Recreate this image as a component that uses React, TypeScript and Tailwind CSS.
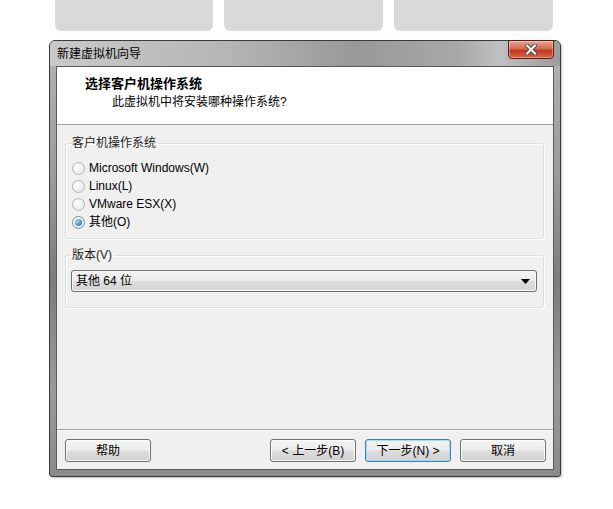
import React from "react";

const ui = "font-['Liberation_Sans','Noto_Sans_CJK_SC',sans-serif] text-[12px] leading-[16px] text-black";

const Radio = ({ label, checked }: { label: string; checked?: boolean }) => (
  <div className="flex h-[18px] items-center gap-[4px]">
    <span
      className={
        "flex h-[13px] w-[13px] items-center justify-center rounded-full border bg-[radial-gradient(circle_at_35%_35%,#ffffff,#e2e2e2)] " +
        (checked ? "border-[#6d8fae]" : "border-[#b4b4b4]")
      }
    >
      {checked && (
        <span className="h-[7px] w-[7px] rounded-full bg-[radial-gradient(circle_at_35%_35%,#9fd3f5,#1b5e9c)]" />
      )}
    </span>
    <span>{label}</span>
  </div>
);

const Btn = ({ children, primary, className = "" }: { children: React.ReactNode; primary?: boolean; className?: string }) => (
  <button
    className={
      "flex h-[23px] w-[86px] items-center justify-center rounded-[3px] border bg-[linear-gradient(#f4f4f4_0%,#ececec_48%,#dcdcdc_52%,#d2d2d2_100%)] " +
      (primary ? "border-[#3c7fb1] shadow-[inset_0_0_0_1px_#a6ddf6]" : "border-[#707070] shadow-[inset_0_0_0_1px_#fcfcfc]") +
      " " +
      className
    }
  >
    {children}
  </button>
);

export default function App() {
  return (
    <div className={"h-[509px] w-[613px] bg-white " + ui}>
      {/* background cards peeking from the top */}
      <div className="flex h-[31px] gap-[11px] pl-[55px]">
        <div className="w-[158px] rounded-b-[6px] bg-[#d9d9d9]" />
        <div className="w-[159px] rounded-b-[6px] bg-[#d9d9d9]" />
        <div className="w-[159px] rounded-b-[6px] bg-[#d9d9d9]" />
      </div>

      {/* dialog window */}
      <div className="relative ml-[49px] mt-[9px] flex h-[437px] w-[512px] flex-col rounded-t-[6px] rounded-b-[3px] border border-[#3a3a3a] bg-[linear-gradient(180deg,#b4b4b4_0%,#9c9c9c_30%,#7c7c7c_55%,#9a9a9a_80%,#8a8a8a_100%)] shadow-[1px_1px_2px_rgba(0,0,0,0.25)]">
        <div className="flex h-[25px] items-center rounded-t-[5px] bg-[linear-gradient(90deg,#c9c9c9_0%,#b5b5b5_35%,#989898_60%,#a8a8a8_80%,#c0c0c0_88%,#9c9c9c_100%)] pl-[7px]">
          <span className="pt-[1px]">新建虚拟机向导</span>
        </div>

        {/* close button */}
        <div className="absolute right-[6px] top-[-1px] flex h-[19px] w-[46px] items-center justify-center rounded-b-[4px] border border-[#5b1a12] bg-[linear-gradient(#e8a493_0%,#d56a52_45%,#c2381d_55%,#d7644a_100%)] shadow-[inset_0_0_0_1px_rgba(255,255,255,0.35)]">
          <svg width="12" height="11" viewBox="0 0 12 11">
            <path d="M2 1.5 L10 9.5 M10 1.5 L2 9.5" stroke="#4a4a4a" strokeWidth="4" strokeLinecap="square" />
            <path d="M2 1.5 L10 9.5 M10 1.5 L2 9.5" stroke="#ffffff" strokeWidth="2" strokeLinecap="square" />
          </svg>
        </div>

        {/* client area */}
        <div className="mx-[6px] mb-[6px] flex flex-1 flex-col border border-[#5a5a5a] bg-[#f0f0f0]">
          <div className="h-[58px] border-b border-[#a0a0a0] bg-white pl-[28px] pt-[9px]">
            <div className="text-[13px] font-bold leading-[16px]">选择客户机操作系统</div>
            <div className="pl-[27px] pt-[2px]">此虚拟机中将安装哪种操作系统?</div>
          </div>

          <div className="flex flex-1 flex-col border-b border-[#a0a0a0] pl-[8px] pr-[9px] pt-[10px] shadow-[0_1px_0_#ffffff]">
            <fieldset className="h-[104px] rounded-[3px] border border-[#d9dfe3] px-[6px] shadow-[inset_1px_1px_0_#ffffff,1px_1px_0_#ffffff]">
              <legend className="px-0 pr-[3px] text-[#1e1e1e]">客户机操作系统</legend>
              <div className="flex flex-col pt-[8px]">
                <Radio label="Microsoft Windows(W)" />
                <Radio label="Linux(L)" />
                <Radio label="VMware ESX(X)" />
                <Radio label="其他(O)" checked />
              </div>
            </fieldset>

            <fieldset className="mt-[8px] h-[61px] rounded-[3px] border border-[#d9dfe3] pl-[5px] pr-[6px] shadow-[inset_1px_1px_0_#ffffff,1px_1px_0_#ffffff]">
              <legend className="px-0 pl-[1px] pr-[3px] text-[#1e1e1e]">版本(V)</legend>
              <div className="pt-[7px]">
                <div className="flex h-[22px] items-center justify-between rounded-[3px] border border-[#707070] bg-[linear-gradient(#f3f3f3_0%,#ebebeb_48%,#dddddd_52%,#d4d4d4_100%)] pl-[4px] pr-[6px] shadow-[inset_0_0_0_1px_#fafafa]">
                  <span>其他 64 位</span>
                  <svg width="9" height="5" viewBox="0 0 9 5">
                    <path d="M0 0 H9 L4.5 5 Z" fill="#000" />
                  </svg>
                </div>
              </div>
            </fieldset>
          </div>

          <div className="flex h-[39px] items-start pl-[8px] pr-[7px] pt-[9px]">
            <Btn>帮助</Btn>
            <div className="flex-1" />
            <div className="flex gap-[9px]">
              <Btn>&lt; 上一步(B)</Btn>
              <Btn primary>下一步(N) &gt;</Btn>
              <Btn>取消</Btn>
            </div>
          </div>
        </div>
      </div>
    </div>
  );
}
